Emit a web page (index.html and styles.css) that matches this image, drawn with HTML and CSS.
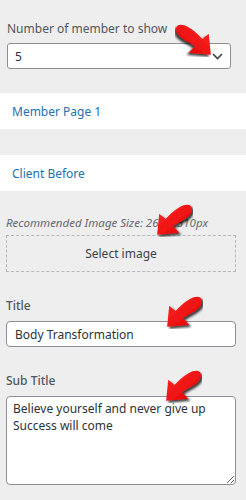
FILE: index.html
```html
<!DOCTYPE html>
<html lang="en">
<head>
  <meta charset="UTF-8">
  <meta name="viewport" content="width=device-width, initial-scale=1.0">
  <title>Member settings</title>
  <link rel="stylesheet" href="styles.css">
</head>
<body>
  <svg width="0" height="0" class="defs">
    <defs>
      <filter id="shadow" x="-20%" y="-20%" width="150%" height="150%">
        <feDropShadow dx="2" dy="2" stdDeviation="1.2" flood-color="#000" flood-opacity="0.75"/>
      </filter>
      <linearGradient id="red" x1="0" y1="0" x2="1" y2="1">
        <stop offset="0" stop-color="#ff2a2a"/>
        <stop offset="1" stop-color="#e00000"/>
      </linearGradient>
      <symbol id="arrow" viewBox="0 0 36 32">
        <path d="M2,30 L4,10 L10,15 Q19,5 27,2 Q35,0 35,6 Q35,11 27,16 Q21,19 17,22 L23,28 Z" fill="url(#red)" filter="url(#shadow)"/>
      </symbol>
    </defs>
  </svg>

  <div class="panel">
    <div class="field first">
      <label class="label">Number of member to show</label>
      <div class="select">
        <span>5</span>
        <svg class="chevron" width="11" height="7" viewBox="0 0 11 7"><path d="M1,1 L5.5,5.5 L10,1" fill="none" stroke="#3c434a" stroke-width="1.6"/></svg>
      </div>
    </div>

    <div class="band">Member Page 1</div>
    <div class="band">Client Before</div>

    <div class="field image">
      <p class="hint">Recommended Image Size: 267 X 310px</p>
      <div class="dropzone">Select image</div>
    </div>

    <div class="field">
      <label class="label strong">Title</label>
      <div class="input">Body Transformation</div>
    </div>

    <div class="field">
      <label class="label strong">Sub Title</label>
      <textarea class="textarea">Believe yourself and never give up
Success will come</textarea>
    </div>
  </div>

  <!-- annotation arrows -->
  <svg class="arrow flip" style="left:175px;top:23px"><use href="#arrow"/></svg>
  <svg class="arrow" style="left:155px;top:203px"><use href="#arrow"/></svg>
  <svg class="arrow" style="left:165px;top:295px"><use href="#arrow"/></svg>
  <svg class="arrow" style="left:164px;top:369px"><use href="#arrow"/></svg>
</body>
</html>
```

FILE: styles.css
```css
* { box-sizing: border-box; }
body {
  margin: 0;
  background: #eeeeee;
  font-family: 'Noto Sans', 'Open Sans', sans-serif;
  font-size: 12px;
  color: #3c434a;
  position: relative;
  height: 500px;
  overflow: hidden;
}
.defs {
  position: absolute;
}
.panel {
  display: flex;
  flex-direction: column;
}
.field {
  padding: 25px 10px 0 6px;
  display: flex;
  flex-direction: column;
}
.field.first {
  padding: 20px 15px 24px 7px;
}
.label {
  font-size: 12px;
  line-height: 18px;
  color: #50575e;
  margin-bottom: 5px;
}
.label.strong {
  font-weight: 500;
  margin-bottom: 6px;
}
.select {
  height: 26px;
  background: #fff;
  border: 1px solid #8c8f94;
  border-radius: 3px;
  display: flex;
  align-items: center;
  justify-content: space-between;
  padding: 0 7px 0 7px;
  color: #2c3338;
}
.band {
  background: #fff;
  height: 36px;
  display: flex;
  align-items: center;
  padding-left: 12px;
  color: #2271b1;
  font-size: 12px;
  margin-bottom: 26px;
}
.band + .band {
  margin-bottom: 0;
}
.field.image {
  padding-top: 24px;
}
.hint {
  margin: 0 0 4px;
  font-style: italic;
  font-size: 11.5px;
  line-height: 16px;
  color: #646970;
}
.dropzone {
  height: 37px;
  border: 1px dashed #b4b9be;
  display: flex;
  align-items: center;
  justify-content: center;
  color: #3c434a;
}
.input {
  height: 26px;
  background: #fff;
  border: 1px solid #8c8f94;
  border-radius: 4px;
  display: flex;
  align-items: center;
  padding-left: 8px;
  color: #2c3338;
}
.textarea {
  height: 89px;
  background: #fff;
  border: 1px solid #8c8f94;
  border-radius: 4px;
  padding: 3px 6px;
  font-family: inherit;
  font-size: 12px;
  line-height: 17px;
  color: #2c3338;
  resize: both;
  margin: 0;
}
.arrow {
  position: absolute;
  width: 38px;
  height: 34px;
  overflow: visible;
}
.arrow.flip {
  transform: scaleX(-1);
}
```
